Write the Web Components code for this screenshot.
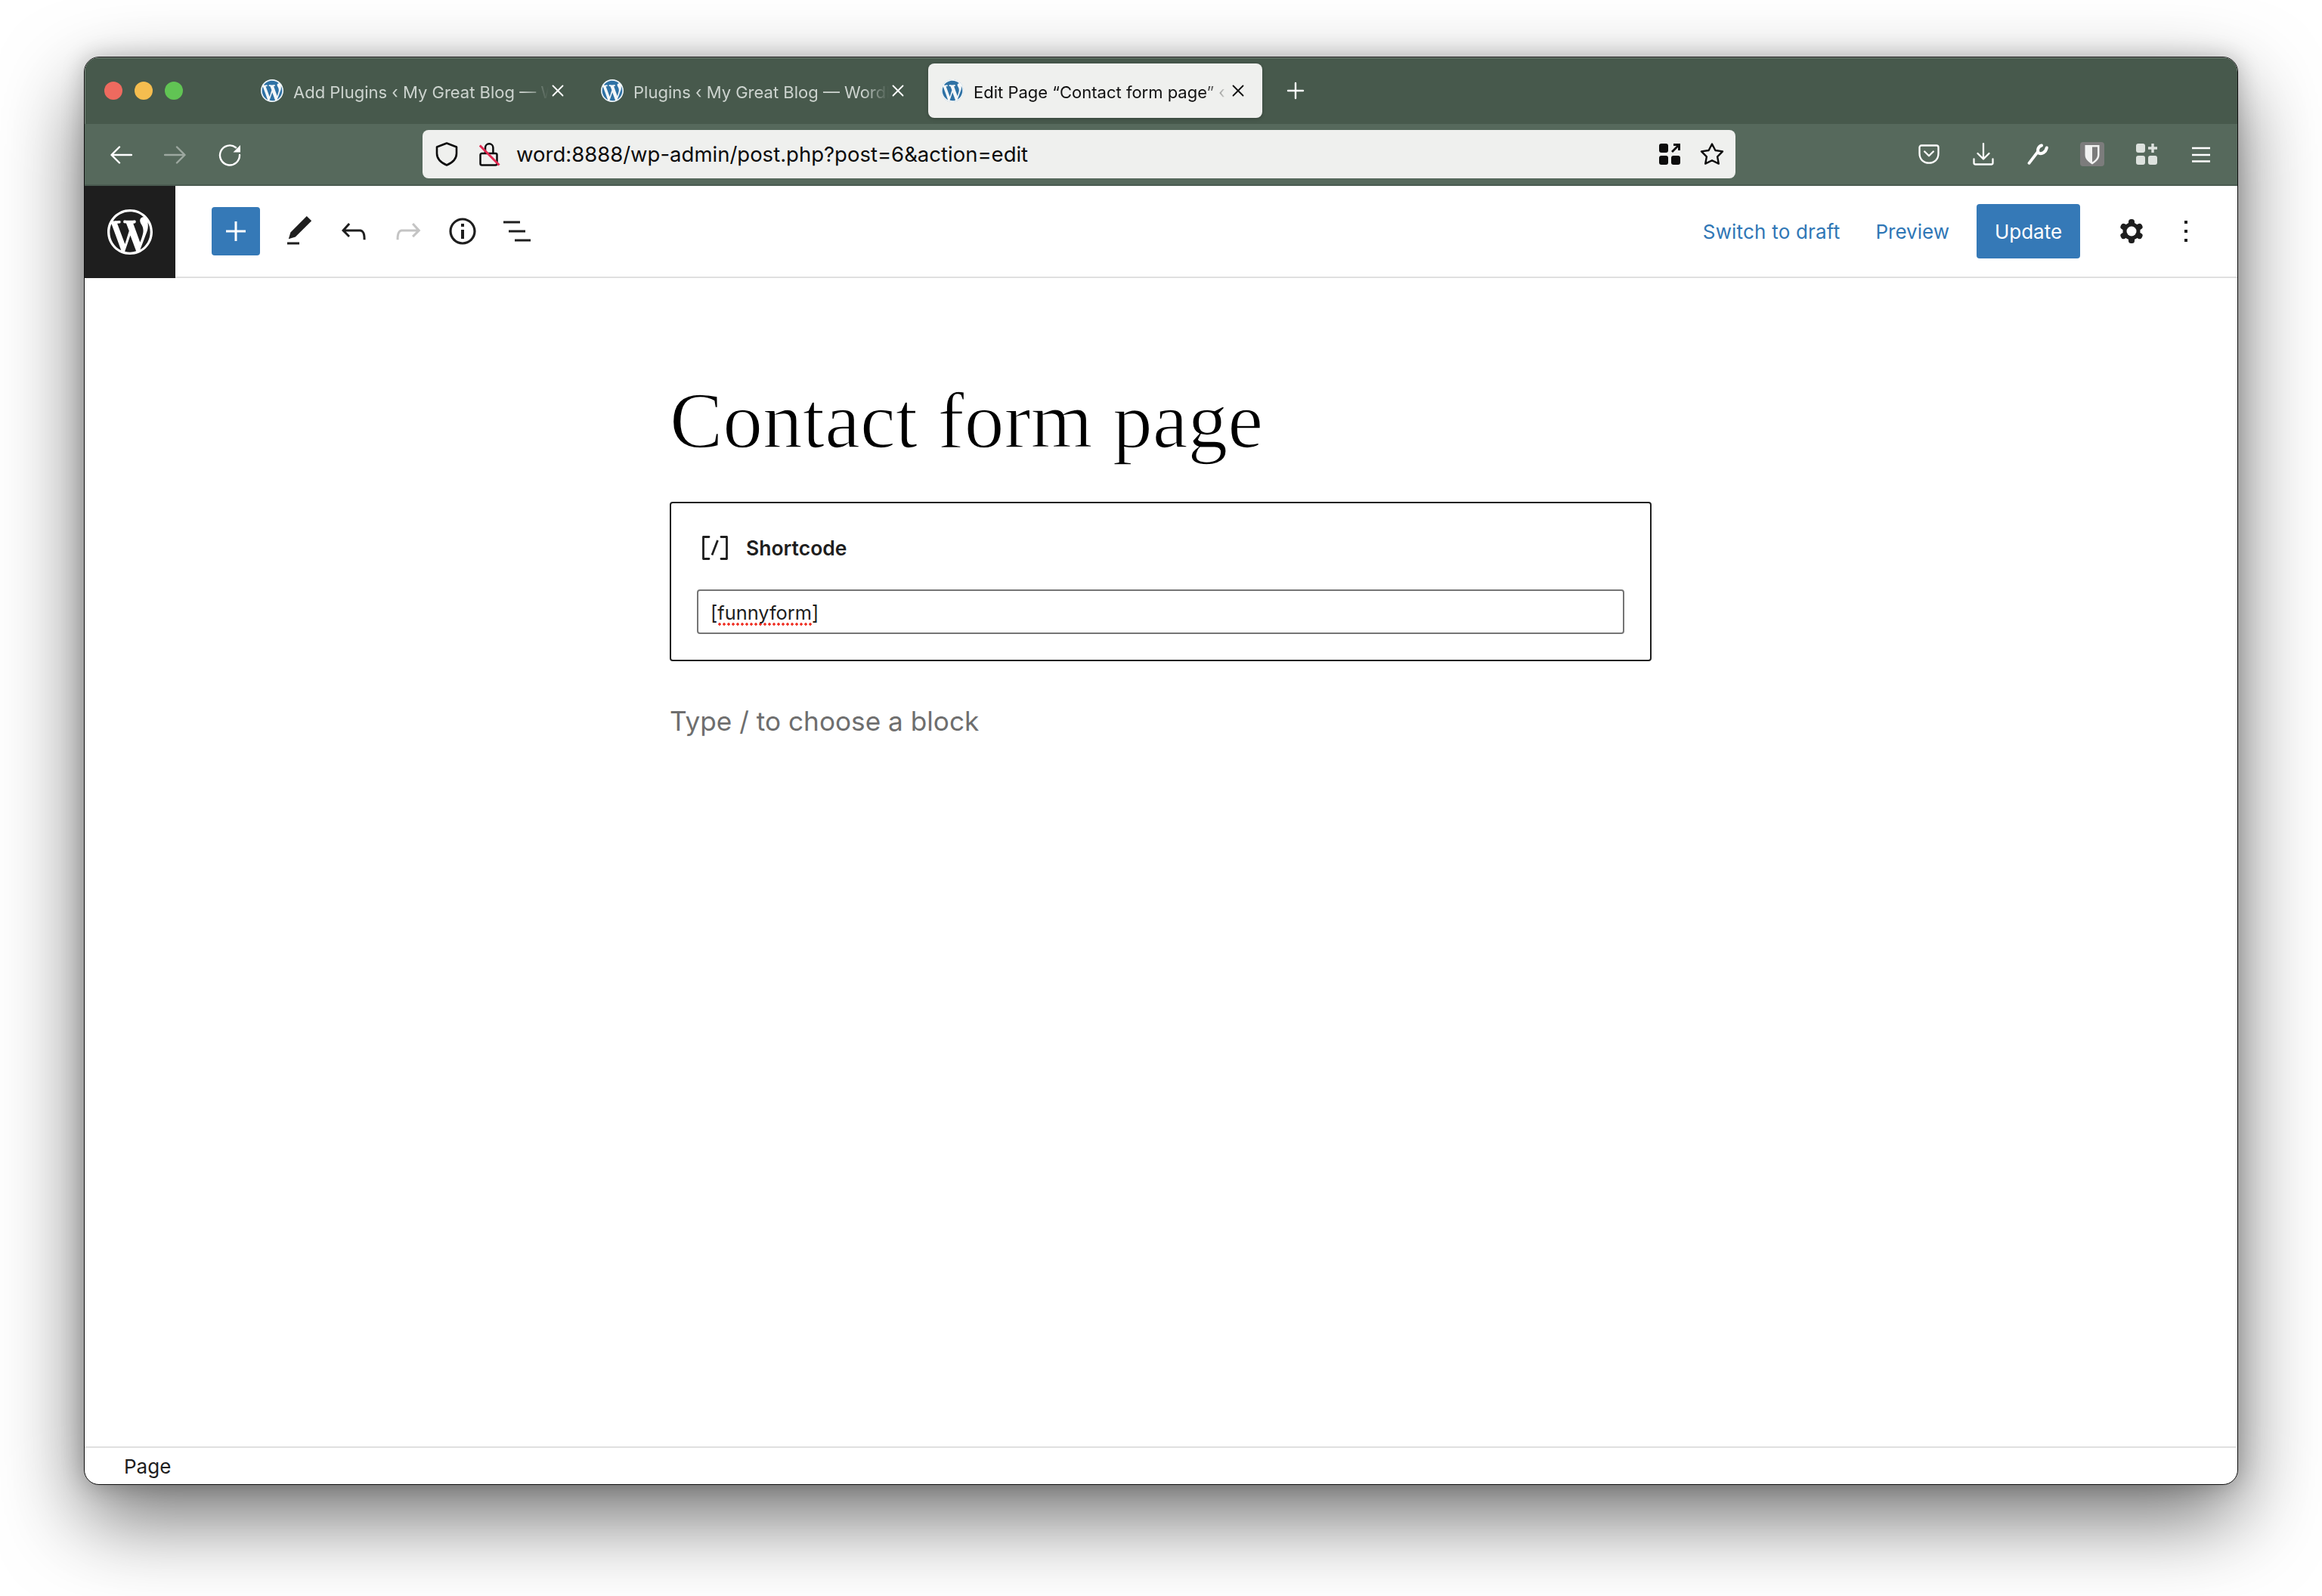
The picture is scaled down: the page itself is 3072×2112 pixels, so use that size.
<!DOCTYPE html>
<html lang="en">
<head>
<meta charset="utf-8">
<title>Edit Page</title>
<style>
html,body{margin:0;padding:0;background:#fff;}
body{width:3072px;height:2112px;overflow:hidden;font-family:Inter,"Liberation Sans",sans-serif;}
</style>
</head>
<body>
<browser-window>
  <tab-strip>
    <traffic-lights></traffic-lights>
    <browser-tab>Add Plugins ‹ My Great Blog — WordPress</browser-tab>
    <browser-tab>Plugins ‹ My Great Blog — WordPress</browser-tab>
    <browser-tab active>Edit Page “Contact form page” ‹ My Great Blog — WordPress</browser-tab>
    <app-icon name="newtab" class="newtab"></app-icon>
  </tab-strip>
  <nav-toolbar url="word:8888/wp-admin/post.php?post=6&amp;action=edit"></nav-toolbar>
  <wp-toolbar></wp-toolbar>
  <editor-canvas>
    <shortcode-block value="funnyform"></shortcode-block>
  </editor-canvas>
  <status-footer>Page</status-footer>
</browser-window>

<script>
const WP='M20 10c0-5.51-4.49-10-10-10C4.48 0 0 4.49 0 10c0 5.52 4.48 10 10 10 5.51 0 10-4.48 10-10zM7.78 15.37L4.37 6.22c.55-.02 1.17-.08 1.17-.08.5-.06.44-1.13-.06-1.11 0 0-1.45.11-2.37.11-.18 0-.37 0-.58-.01C4.12 2.69 6.87 1.11 10 1.11c2.33 0 4.45.87 6.05 2.34-.68-.11-1.65.39-1.65 1.58 0 .74.45 1.36.9 2.1.35.61.55 1.36.55 2.46 0 1.49-1.4 5-1.4 5l-3.03-8.37c.54-.02.82-.17.82-.17.5-.05.44-1.25-.06-1.22 0 0-1.44.12-2.38.12-.87 0-2.33-.12-2.33-.12-.5-.03-.56 1.2-.06 1.22l.92.08 1.26 3.41zM17.41 10c.24-.64.74-1.87.43-4.25.7 1.29 1.05 2.71 1.05 4.25 0 3.29-1.73 6.24-4.4 7.78.97-2.59 1.94-5.2 2.92-7.78zM6.1 18.09C3.12 16.65 1.11 13.53 1.11 10c0-1.3.23-2.48.72-3.59C3.25 10.3 4.67 14.2 6.1 18.09zm4.03-6.63l2.58 6.98c-.86.29-1.76.45-2.71.45-.79 0-1.57-.11-2.29-.33.81-2.38 1.62-4.74 2.42-7.1z';
const s=(d,w,extra='')=>`<path d="${d}" fill="none" stroke="currentColor" stroke-width="${w}" stroke-linecap="round" stroke-linejoin="round" ${extra}/>`;
const ICONS={
  wp:[60,60,'0 0 20 20',`<path fill="#fff" d="${WP}"/>`],
  favicon:[30,30,'0 0 20 20',`<circle cx="10" cy="10" r="9.8" fill="#2f72a5"/><path fill="#f4f7f8" d="${WP}"/>`],
  close:[16,16,'0 0 16 16',s('M1.5 1.5l13 13M14.5 1.5l-13 13',1.8)],
  newtab:[24,24,'0 0 24 24',s('M12 2v20M2 12h20',2.4)],
  back:[30,26,'0 0 30 26',s('M29 13H3M13 2.5 2.5 13 13 23.5',2.4)],
  forward:[30,26,'0 0 30 26',s('M1 13H27M17 2.5 27.5 13 17 23.5',2.4)],
  reload:[30,30,'0 0 30 30',s('M23 5.2A13 13 0 1 0 28 15',2.4)+'<path d="M29 2v9.5h-9.5z" fill="currentColor"/>'],
  shield:[30,32,'0 0 30 32',s('M15 1.5 28 6.5V15C28 23 21 28 15 30.5 9 28 2 23 2 15V6.5Z',2.6)],
  lock:[28,32,'0 0 28 32',s('M3.5 15H21.5a2 2 0 0 1 2 2V28.5a2 2 0 0 1-2 2H3.5a2 2 0 0 1-2-2V17a2 2 0 0 1 2-2ZM8 15V7.5a5.2 5.2 0 0 1 10.4 0V15',2.5)+'<path d="M.8 4.5 26.5 30.5" stroke="#e22850" stroke-width="3" fill="none"/>'],
  grid:[28,28,'0 0 28 28','<g fill="#0c0c0c"><rect width="12" height="12" rx="3"/><rect y="16" width="12" height="12" rx="3"/><rect x="16" y="16" width="12" height="12" rx="3"/><path d="M19 0h9v9h-3V5L18 12l-2-2 7-7h-4z"/></g>'],
  star:[32,30,'0 0 32 30',s('M16 1.5 20.4 10 30 11.4 23.1 18.3 24.8 27.6 16 23.2 7.2 27.6 8.9 18.3 2 11.4 11.6 10Z',2.4)],
  pocket:[28,26,'0 0 28 26',s('M4 1.5H24A2.5 2.5 0 0 1 26.5 4V12C26.5 20 21 24.7 14 24.7 7 24.7 1.5 20 1.5 12V4A2.5 2.5 0 0 1 4 1.5ZM8.2 9.5 14 15.3 19.8 9.5',2.3)],
  download:[28,30,'0 0 28 30',s('M14 1V21.5M6.5 14 14 21.5 21.5 14M1.5 21.5V26.5A2 2 0 0 0 3.5 28.5H24.5A2 2 0 0 0 26.5 26.5V21.5',2.3)],
  wrench:[28,28,'0 0 28 28',s('M2.5 25.8 13.5 11.5',3.8)+s('M19 2.5C14.5 4 13 8.5 15 12.5 19.5 14.6 24.5 11.5 25.8 5.5',4)],
  bitwarden:[32,32,'0 0 32 32','<rect width="32" height="32" rx="4" fill="#7c7c7c"/><path d="M6.500 4H25.500V17C25.500 23 20 27 16 29.500 12 27 6.500 23 6.500 17Z" fill="#f1f2f1"/><path d="M16 6.500H23V17C23 21 19.500 24.500 16 26.500Z" fill="#7c7c7c"/>'],
  extensions:[29,28,'0 0 29 28','<g fill="#dde2de"><rect width="12" height="12" rx="3"/><rect y="16" width="12" height="12" rx="3"/><rect x="16" y="16" width="12" height="12" rx="3"/></g><path d="M22 0v12M16 6h12" stroke="#dde2de" stroke-width="3.4"/>'],
  menu:[24,22,'0 0 24 22','<path d="M0 3h24M0 12h24M0 20.500h24" stroke="currentColor" stroke-width="2.6"/>'],
  plus:[26,26,'0 0 26 26','<path d="M13 0v26M0 13h26" stroke="#fff" stroke-width="3"/>'],
  pen:[48,48,'0 0 24 24','<path fill="#1e1e1e" d="M20.1 5.100 16.900 2 6.200 12.700l-1.300 4.400 4.500-1.300L20.100 5.100zM4 20.800h8v-1.500H4v1.500z"/>'],
  undo:[48,48,'0 0 24 24','<path fill="currentColor" d="M18.300 11.700c-.6-.6-1.400-.9-2.300-.9H6.700l2.900-3.300-1.100-1-4.500 5L8.500 16l1-1-2.700-2.700H16c.5 0 .9.2 1.300.5 1 1 1 3.400 1 4.500v.3h1.500v-.2c0-1.500 0-4.300-1.500-5.700z"/>'],
  redo:[48,48,'0 0 24 24','<path fill="currentColor" d="M15.600 6.500l-1.100 1 2.900 3.300H8c-.9 0-1.700.3-2.300.9-1.400 1.500-1.400 4.200-1.400 5.700v.2h1.500v-.3c0-1.100 0-3.500 1-4.500.3-.3.7-.5 1.300-.5h9.200L14.500 15l1.100 1.100 4.600-4.600-4.600-5z"/>'],
  info:[48,48,'0 0 24 24','<path fill="#1e1e1e" d="M12 3.200c-4.800 0-8.800 3.900-8.800 8.800 0 4.800 3.900 8.800 8.800 8.800 4.800 0 8.800-3.900 8.800-8.800 0-4.800-4-8.800-8.800-8.800zm0 16c-4 0-7.200-3.300-7.200-7.200C4.800 8 8 4.800 12 4.800s7.200 3.300 7.200 7.200c0 4-3.200 7.200-7.200 7.200zM11 17h2v-6h-2v6zm0-8h2V7h-2v2z"/>'],
  list:[48,48,'0 0 24 24','<path d="M3 6h11M6.500 12h11M10.500 18H21" stroke="#1e1e1e" stroke-width="1.500" fill="none"/>'],
  gear:[48,48,'0 0 48 48','<g fill="#1e1e1e"><circle cx="24" cy="24" r="11.500"/><rect x="20" y="8" width="8" height="32" rx="3.500"/><rect x="20" y="8" width="8" height="32" rx="3.500" transform="rotate(60 24 24)"/><rect x="20" y="8" width="8" height="32" rx="3.500" transform="rotate(120 24 24)"/></g><circle cx="24" cy="24" r="6.500" fill="#fff"/>'],
  more:[48,48,'0 0 48 48','<path fill="#1e1e1e" d="M22 10h4v4h-4zM22 22h4v4h-4zM22 34h4v4h-4z"/>'],
  brackets:[34,32,'0 0 34 32',s('M9 1.500H1.500V30.500H9M25 1.500H32.500V30.500H25',2.8,'stroke-linecap="butt"')+'<path d="M13 25.500 20.500 6" stroke="currentColor" stroke-width="2.800" fill="none"/>']
};
const define=(tag,css,html,init)=>customElements.define(tag,class extends HTMLElement{
  connectedCallback(){ if(this.shadowRoot) return;
    const r=this.attachShadow({mode:'open'});
    r.innerHTML=`<style>${css}</style>${typeof html==='function'?html(this):html}`;
    if(init) init(this,r);
  }
});
customElements.define('app-icon',class extends HTMLElement{
  connectedCallback(){ if(this.shadowRoot) return;
    const [w,h,vb,body]=ICONS[this.getAttribute('name')];
    this.attachShadow({mode:'open'}).innerHTML=`<style>:host{display:block;flex:none;line-height:0;width:${w}px;height:${h}px}svg{display:block}</style><svg xmlns="http://www.w3.org/2000/svg" width="${w}" height="${h}" viewBox="${vb}">${body}</svg>`;
  }
});
define('browser-window',`:host{display:flex;flex-direction:column;box-sizing:border-box;width:2850px;height:1890px;margin:75px 0 0 111px;border:1px solid #0d0d0d;border-radius:20px;overflow:hidden;background:#fff;box-shadow:0 44px 110px rgba(0,0,0,.56),0 0 30px rgba(0,0,0,.22);}
`,'<slot></slot>');
define('tab-strip',`:host{display:flex;align-items:flex-start;box-sizing:border-box;height:88px;padding:8px 0 0 26px;gap:8px;background:#47594c;box-shadow:inset 1px 1px 0 #7c8a80;flex:none}
::slotted(.newtab){margin:24px 0 0 24px;color:#fff}`,'<slot></slot>');
define('traffic-lights',`:host{display:flex;gap:16px;width:182px;margin-top:24px;flex:none}
i{display:block;width:24px;height:24px;border-radius:50%}`,
`<i style="background:#ee6a5f"></i><i style="background:#f5bd4f"></i><i style="background:#61c454"></i>`);
define('browser-tab',`:host{display:flex;align-items:center;box-sizing:border-box;width:442px;height:72px;padding:0 0 0 17px;border-radius:8px;color:#ccd3ce;font:22px/1 Inter,"Liberation Sans",sans-serif;flex:none}
:host([active]){background:#eff0ee;color:#111;box-shadow:0 1px 4px rgba(0,0,0,.25)}
.t{width:345px;margin:0 0 0 13px;padding-top:3px;white-space:nowrap;overflow:hidden;line-height:40px;-webkit-mask-image:linear-gradient(90deg,#000 88%,transparent 98%);mask-image:linear-gradient(90deg,#000 88%,transparent 98%)}
.x{color:#fff;margin-left:-3px}:host([active]) .x{color:#111}`,
`<app-icon name="favicon"></app-icon><span class="t"><slot></slot></span><app-icon class="x" name="close"></app-icon>`);
define('nav-toolbar',`:host{display:flex;align-items:center;box-sizing:border-box;height:82px;padding:0 12px;background:#56695c;border-bottom:2px solid #4a5b50;color:#fff;flex:none}
.b{width:72px;display:flex;justify-content:center;flex:none}
.nudge{padding-top:2px}
.dim{opacity:.42}
.url{display:flex;align-items:center;box-sizing:border-box;width:1737px;height:64px;margin-left:219px;padding:0 15px 0 17px;background:#eff0ee;border-radius:8px;color:#0c0c0c;font:27.5px/1 Inter,"Liberation Sans",sans-serif}
.url .lock{margin-left:28px}
.url span{margin-left:21px;padding-top:2px;flex:1;white-space:nowrap}
.url .star{margin-left:26px}
.right{display:flex;margin-left:auto;align-items:center}`,
t=>`<div class="b nudge"><app-icon name="back"></app-icon></div><div class="b nudge dim"><app-icon name="forward"></app-icon></div><div class="b nudge"><app-icon name="reload"></app-icon></div>
<div class="url"><app-icon name="shield"></app-icon><app-icon class="lock" name="lock"></app-icon><span>${t.getAttribute('url').replace(/&/g,'&amp;')}</span><app-icon name="grid"></app-icon><app-icon class="star" name="star"></app-icon></div>
<div class="right"><div class="b"><app-icon name="pocket"></app-icon></div><div class="b"><app-icon name="download"></app-icon></div><div class="b"><app-icon name="wrench"></app-icon></div><div class="b"><app-icon name="bitwarden"></app-icon></div><div class="b"><app-icon name="extensions"></app-icon></div><div class="b"><app-icon name="menu"></app-icon></div></div>`);
define('wp-toolbar',`:host{display:flex;align-items:center;box-sizing:border-box;height:122px;border-bottom:2px solid #e0e0e0;padding-right:44px;color:#1e1e1e;flex:none;font:26px/1 Inter,"Liberation Sans",sans-serif}
.logo{width:120px;height:122px;margin-bottom:-2px;background:#1e1e1e;display:flex;align-items:center;justify-content:center;flex:none}
.add{width:64px;height:64px;margin-left:48px;background:#3579b7;border-radius:4px;display:flex;align-items:center;justify-content:center;flex:none}
.tools{display:flex;gap:24px;margin-left:28px}
.off{color:#c4c4c4}
.acts{display:flex;align-items:center;margin-left:auto}
a{color:#3077b6;text-decoration:none;white-space:nowrap;padding-top:1px}
.sw{letter-spacing:.2px}
.prev{margin-left:47px}
.up{display:flex;align-items:center;justify-content:center;box-sizing:border-box;width:137px;height:72px;margin-left:36px;padding-top:1px;background:#3579b7;color:#fff;border-radius:4px}
.gear{margin-left:44px}.more{margin-left:24px}`,
`<div class="logo"><app-icon name="wp"></app-icon></div><div class="add"><app-icon name="plus"></app-icon></div>
<div class="tools"><app-icon name="pen"></app-icon><app-icon name="undo"></app-icon><app-icon class="off" name="redo"></app-icon><app-icon name="info"></app-icon><app-icon name="list"></app-icon></div>
<div class="acts"><a class="sw">Switch to draft</a><a class="prev">Preview</a><div class="up">Update</div><app-icon class="gear" name="gear"></app-icon><app-icon class="more" name="more"></app-icon></div>`);
define('editor-canvas',`:host{display:block;flex:1;min-height:0;background:#fff}
.col{width:1299px;margin:0 0 0 774px;box-sizing:border-box;padding-top:136px}
h1{margin:0;font:400 105.5px/1 "Liberation Serif",serif;color:#000;-webkit-text-stroke:1.6px #fff;height:160px;white-space:nowrap}
p{margin:57px 0 0;font:35.2px/44px Inter,"Liberation Sans",sans-serif;color:#6e6e6e;white-space:nowrap}`,
`<div class="col"><h1>Contact form page</h1><slot></slot><p>Type / to choose a block</p></div>`);
define('shortcode-block',`:host{display:block;box-sizing:border-box;height:211px;padding:42px 34px 0;border:2px solid #1e1e1e;border-radius:4px;color:#1e1e1e}
.head{display:flex;align-items:center;height:34px;padding-left:7px;font:600 26.5px/1 Inter,"Liberation Sans",sans-serif;gap:24px}
.in{display:flex;align-items:center;box-sizing:border-box;height:59px;margin:38px 0 0 0;padding:2px 0 0 16px;border:2px solid #757575;border-radius:4px;font:25.4px/1 Inter,"Liberation Sans",sans-serif}
.sp{padding-bottom:2px;background:radial-gradient(circle,#ef3024 1.5px,transparent 1.9px) 0 100%/6px 4px repeat-x}`,
t=>`<div class="head"><app-icon name="brackets"></app-icon><span>Shortcode</span></div><div class="in"><span>[<span class="sp">${t.getAttribute('value')}</span>]</span></div>`);
define('status-footer',`:host{display:flex;align-items:center;box-sizing:border-box;height:50px;margin-right:2px;padding:1px 0 0 52px;border-top:2px solid #e0e0e0;color:#1e1e1e;font:26px/1 Inter,"Liberation Sans",sans-serif;flex:none}`,'<slot></slot>');
</script>
</body>
</html>
